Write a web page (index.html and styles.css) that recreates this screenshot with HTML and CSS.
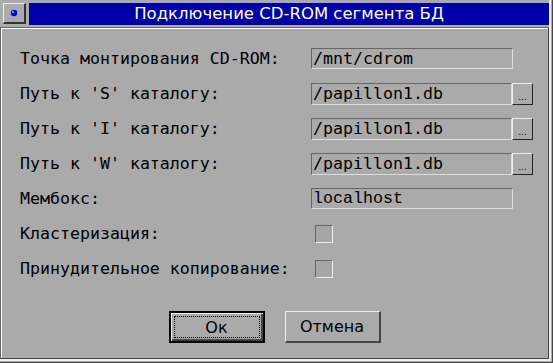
FILE: index.html
```html
<!DOCTYPE html>
<html lang="ru">
<head>
    <meta charset="UTF-8">
    <title>Подключение CD-ROM сегмента БД</title>
    <link rel="stylesheet" href="styles.css">
</head>
<body>
    <div class="window">
        <div class="titlebar">
            <div class="menu-button">
                <svg width="8" height="8" viewBox="0 0 8 8">
                    <circle cx="4" cy="4" r="3.2" fill="#0000ee"/>
                    <circle cx="3" cy="3" r="1" fill="#aaccff"/>
                </svg>
            </div>
            <div class="title">Подключение CD-ROM сегмента БД</div>
        </div>

        <div class="panel">
            <div class="form">
                <div class="label">Точка монтирования CD-ROM:</div>
                <div class="field"><div class="input">/mnt/cdrom</div></div>

                <div class="label">Путь к 'S' каталогу:</div>
                <div class="field"><div class="input short">/papillon1.db</div><div class="browse">...</div></div>

                <div class="label">Путь к 'I' каталогу:</div>
                <div class="field"><div class="input short">/papillon1.db</div><div class="browse">...</div></div>

                <div class="label">Путь к 'W' каталогу:</div>
                <div class="field"><div class="input short">/papillon1.db</div><div class="browse">...</div></div>

                <div class="label">Мембокс:</div>
                <div class="field"><div class="input courier">localhost</div></div>

                <div class="label">Кластеризация:</div>
                <div class="field"><div class="checkbox"></div></div>

                <div class="label">Принудительное копирование:</div>
                <div class="field"><div class="checkbox"></div></div>
            </div>

            <div class="buttons">
                <button class="button default"><span class="focus">Ок</span></button>
                <button class="button">Отмена</button>
            </div>
        </div>
    </div>
</body>
</html>
```

FILE: styles.css
```css
html, body {
    margin: 0;
    padding: 0;
    background: #aaaaaa;
}
.window {
    width: 553px;
    height: 363px;
    box-sizing: border-box;
    padding-top: 3px;
    background: #aaaaaa;
    border-right: 1px solid #444444;
    border-bottom: 1px solid #444444;
    box-shadow: inset -1px -1px 0 #aaaaaa, inset -3px -3px 0 #eeeeee;
}
.titlebar {
    display: flex;
    gap: 3px;
    height: 22px;
    margin: 0 3px;
}
.menu-button {
    width: 23px;
    height: 21px;
    box-sizing: border-box;
    border-top: 1px solid #eeeeee;
    border-left: 1px solid #eeeeee;
    border-right: 2px solid #333333;
    border-bottom: 2px solid #333333;
    display: flex;
    align-items: center;
    justify-content: center;
}
.title {
    flex: 1;
    background: #0000aa;
    color: #ffffff;
    font-family: "DejaVu Sans", sans-serif;
    font-size: 16.5px;
    line-height: 22px;
    text-align: center;
}
.panel {
    width: 549px;
    height: 332px;
    margin-top: 2px;
    box-sizing: border-box;
    border-top: 1px solid #666666;
    border-left: 1px solid #666666;
    border-right: 1px solid #444444;
    border-bottom: 1px solid #444444;
    box-shadow: inset 1px 1px 0 #ffffff;
    padding: 13px 0 0 19px;
}
.form {
    display: grid;
    grid-template-columns: 291px auto;
    grid-auto-rows: 35px;
    align-items: center;
}
.label {
    font-family: "DejaVu Sans Mono", monospace;
    font-size: 16.6px;
    color: #000000;
}
.field {
    display: flex;
    align-items: center;
}
.input {
    width: 202px;
    height: 21px;
    box-sizing: border-box;
    border-top: 1px solid #666666;
    border-left: 1px solid #666666;
    border-right: 1px solid #dddddd;
    border-bottom: 1px solid #dddddd;
    padding-left: 1px;
    font-family: "DejaVu Sans Mono", monospace;
    font-size: 16.6px;
    line-height: 19px;
    color: #000000;
    white-space: nowrap;
    overflow: hidden;
}
.input.short {
    width: 201px;
    height: 22px;
    line-height: 20px;
}
.input.courier {
    font-family: "Liberation Mono", monospace;
    font-size: 16.67px;
}
.browse {
    width: 21px;
    height: 22px;
    box-sizing: border-box;
    border-top: 1px solid #eeeeee;
    border-left: 1px solid #eeeeee;
    border-right: 1px solid #222222;
    border-bottom: 1px solid #222222;
    font-family: "DejaVu Sans", sans-serif;
    font-size: 9px;
    line-height: 26px;
    text-align: center;
    overflow: hidden;
    color: #000000;
}
.checkbox {
    width: 18px;
    height: 18px;
    margin-left: 4px;
    box-sizing: border-box;
    border-top: 1px solid #666666;
    border-left: 1px solid #666666;
    border-right: 1px solid #eeeeee;
    border-bottom: 1px solid #eeeeee;
    background: #a6a6a6;
}
.buttons {
    display: flex;
    justify-content: center;
    gap: 20px;
    margin: 25px 0 0 -19px;
}
.button {
    width: 96px;
    height: 32px;
    box-sizing: border-box;
    margin: 0;
    padding: 0;
    background: #aaaaaa;
    border-top: 1px solid #eeeeee;
    border-left: 1px solid #eeeeee;
    border-right: 2px solid #444444;
    border-bottom: 2px solid #444444;
    font-family: "DejaVu Sans", sans-serif;
    font-size: 16px;
    color: #000000;
}
.button.default {
    border: 2px solid #000000;
    box-shadow: inset 1px 1px 0 #eeeeee, inset -2px -2px 0 #444444;
    padding: 3px;
}
.focus {
    display: flex;
    align-items: center;
    justify-content: center;
    height: 100%;
    box-sizing: border-box;
    border: 1px dotted #000000;
}
```
